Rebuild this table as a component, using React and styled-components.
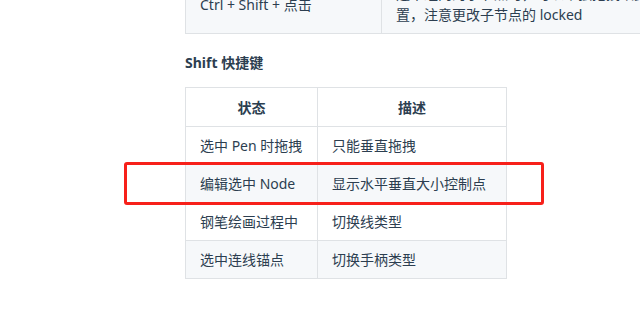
import React from "react";
import styled, { createGlobalStyle } from "styled-components";

const GlobalStyle = createGlobalStyle`
  html, body {
    margin: 0;
    padding: 0;
    background: #fff;
    overflow: hidden;
  }
  body {
    font-family: "Noto Sans", "Noto Sans CJK SC", sans-serif;
    font-size: 14px;
    color: #2c3e50;
  }
`;

const Page = styled.main`
  padding-left: 185px;
  width: 640px;
  box-sizing: border-box;
`;

const Table = styled.table`
  border-collapse: collapse;
  table-layout: fixed;
  line-height: 21px;
`;

const TopTable = styled(Table)`
  margin-top: -26px;
  width: 560px;
`;

const Row = styled.tr`
  background: ${(p) => (p.$striped ? "#f6f8fa" : "#fff")};
`;

const Cell = styled.td`
  border: 1px solid #dfe2e5;
  padding: 8px 14px;
  width: ${(p) => p.$width}px;
  vertical-align: middle;
  box-sizing: border-box;
`;

const HeadCell = styled.th`
  border: 1px solid #dfe2e5;
  padding: 9px 14px 8px;
  font-weight: 700;
  text-align: center;
  width: ${(p) => p.$width}px;
  box-sizing: border-box;
`;

const Heading = styled.h4`
  margin: 18px 0 14px;
  font-size: 14px;
  line-height: 21px;
  font-weight: 700;
`;

const TableWrap = styled.div`
  position: relative;
  width: max-content;
`;

// red annotation box drawn over one row
const Highlight = styled.div`
  position: absolute;
  left: -61px;
  top: 75px;
  width: 420px;
  height: 43px;
  border: 3px solid #f7201a;
  border-radius: 3px;
  box-sizing: border-box;
  pointer-events: none;
`;

const shiftRows = [
  ["选中 Pen 时拖拽", "只能垂直拖拽"],
  ["编辑选中 Node", "显示水平垂直大小控制点"],
  ["钢笔绘画过程中", "切换线类型"],
  ["选中连线锚点", "切换手柄类型"],
];

export default function App() {
  return (
    <>
      <GlobalStyle />
      <Page>
        <TopTable>
          <tbody>
            <Row $striped>
              <Cell $width={196}>Ctrl + Shift + 点击</Cell>
              <Cell $width={364}>
                选中组内的子节点时，可以单独拖拽改变其位
                <br />
                置，注意更改子节点的 locked
              </Cell>
            </Row>
          </tbody>
        </TopTable>

        <Heading>Shift 快捷键</Heading>

        <TableWrap>
          <Table>
            <thead>
              <Row>
                <HeadCell $width={132}>状态</HeadCell>
                <HeadCell $width={189}>描述</HeadCell>
              </Row>
            </thead>
            <tbody>
              {shiftRows.map(([state, desc], i) => (
                <Row key={state} $striped={i % 2 === 1}>
                  <Cell $width={132}>{state}</Cell>
                  <Cell $width={189}>{desc}</Cell>
                </Row>
              ))}
            </tbody>
          </Table>
          <Highlight />
        </TableWrap>
      </Page>
    </>
  );
}
